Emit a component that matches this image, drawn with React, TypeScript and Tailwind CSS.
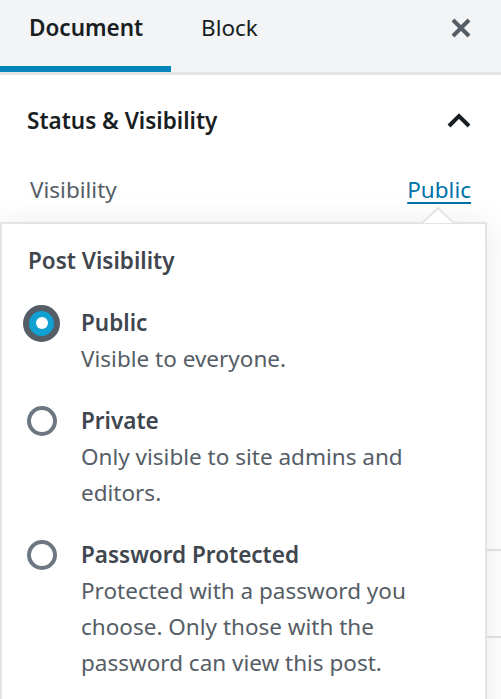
import React from "react";

const labelCls = "text-[22.5px] leading-[36px] font-semibold text-[#40464d]";
const descCls = "text-[22.5px] leading-[36px] text-[#555d66]";

function Radio({ checked }: { checked?: boolean }) {
  if (checked) {
    return (
      <span className="flex h-[37px] w-[37px] items-center justify-center rounded-full border-[6px] border-[#555d66] bg-[#11a0d2]">
        <span className="h-[12px] w-[12px] rounded-full bg-white" />
      </span>
    );
  }
  return (
    <span className="flex h-[37px] w-[37px] items-center justify-center">
      <span className="h-[30px] w-[30px] rounded-full border-[4px] border-[#6c7781] bg-white" />
    </span>
  );
}

function Option({
  label,
  desc,
  checked,
}: {
  label: string;
  desc: string;
  checked?: boolean;
}) {
  return (
    <div className="-ml-[5px] flex gap-[21px]">
      <div className="flex h-[36px] shrink-0 items-center">
        <Radio checked={checked} />
      </div>
      <div className="w-[378px]">
        <div className={labelCls}>{label}</div>
        <p className={descCls}>{desc}</p>
      </div>
    </div>
  );
}

function VisibilityPopover() {
  return (
    <div className="absolute left-0 right-[14px] top-[207px]">
      {/* arrow */}
      <svg
        className="absolute left-[422px] top-0"
        width="32"
        height="17"
        viewBox="0 0 32 17"
      >
        <polygon points="0,16 16,1 32,16" fill="#fff" />
        <polyline
          points="0,16 16,1 32,16"
          fill="none"
          stroke="#e2e4e7"
          strokeWidth="2"
        />
      </svg>
      <div className="mt-[15px] h-[520px] border-2 border-[#e2e4e7] bg-white px-[26px] pt-[19px] shadow-[0_3px_30px_rgba(25,30,35,0.1)]">
        <div className={labelCls}>Post Visibility</div>
        <div className="mt-[26px] flex flex-col gap-[26px]">
          <Option checked label="Public" desc="Visible to everyone." />
          <Option
            label="Private"
            desc="Only visible to site admins and editors."
          />
          <Option
            label="Password Protected"
            desc="Protected with a password you choose. Only those with the password can view this post."
          />
        </div>
      </div>
    </div>
  );
}

export default function App() {
  return (
    <div className="relative h-[699px] w-[501px] overflow-hidden bg-white font-['Noto_Sans','Liberation_Sans',sans-serif]">
      <div className="flex h-[75px] items-start border-b-[3px] border-[#e2e4e7] bg-[#f3f4f5]">
        <button
          type="button"
          className="flex h-[72px] w-[171px] items-center pb-[16px] pl-[29px] text-[22.5px] font-semibold text-[#191e23] shadow-[inset_0_-6px_0_#0085ba]"
        >
          Document
        </button>
        <button
          type="button"
          className="flex h-[72px] items-center pb-[16px] pl-[30px] text-[22.5px] text-[#191e23]"
        >
          Block
        </button>
        <button
          type="button"
          className="ml-auto mr-[30px] flex h-[72px] items-center pb-[16px]"
        >
          <svg width="20" height="20" viewBox="0 0 20 20">
            <path
              d="M2 2 L18 18 M18 2 L2 18"
              stroke="#555d66"
              strokeWidth="4"
              strokeLinecap="butt"
            />
          </svg>
        </button>
      </div>

      <div className="border-b-2 border-[#e2e4e7] px-[27px] pt-[23px]">
        <div className="flex h-[46px] items-center justify-between">
          <h2 className="text-[22.5px] font-semibold text-[#191e23]">
            Status &amp; Visibility
          </h2>
          <svg width="24" height="16" viewBox="0 0 24 16" className="mr-[3px]">
            <polyline
              points="2,13 12,3 22,13"
              fill="none"
              stroke="#191e23"
              strokeWidth="4"
            />
          </svg>
        </div>
        <div className="mt-[28px] flex h-[36px] items-center justify-between pl-[3px]">
          <span className="text-[22.5px] text-[#555d66]">Visibility</span>
          <a
            href="#"
            className="mr-[3px] text-[22.5px] text-[#0073aa] underline underline-offset-[4px]"
          >
            Public
          </a>
        </div>
        <div className="h-[341px]" />
      </div>
      {/* further panels, hidden under the popover */}
      <div className="h-[87px] border-b-2 border-[#e2e4e7]" />
      <div className="h-[60px]" />

      <VisibilityPopover />
    </div>
  );
}
